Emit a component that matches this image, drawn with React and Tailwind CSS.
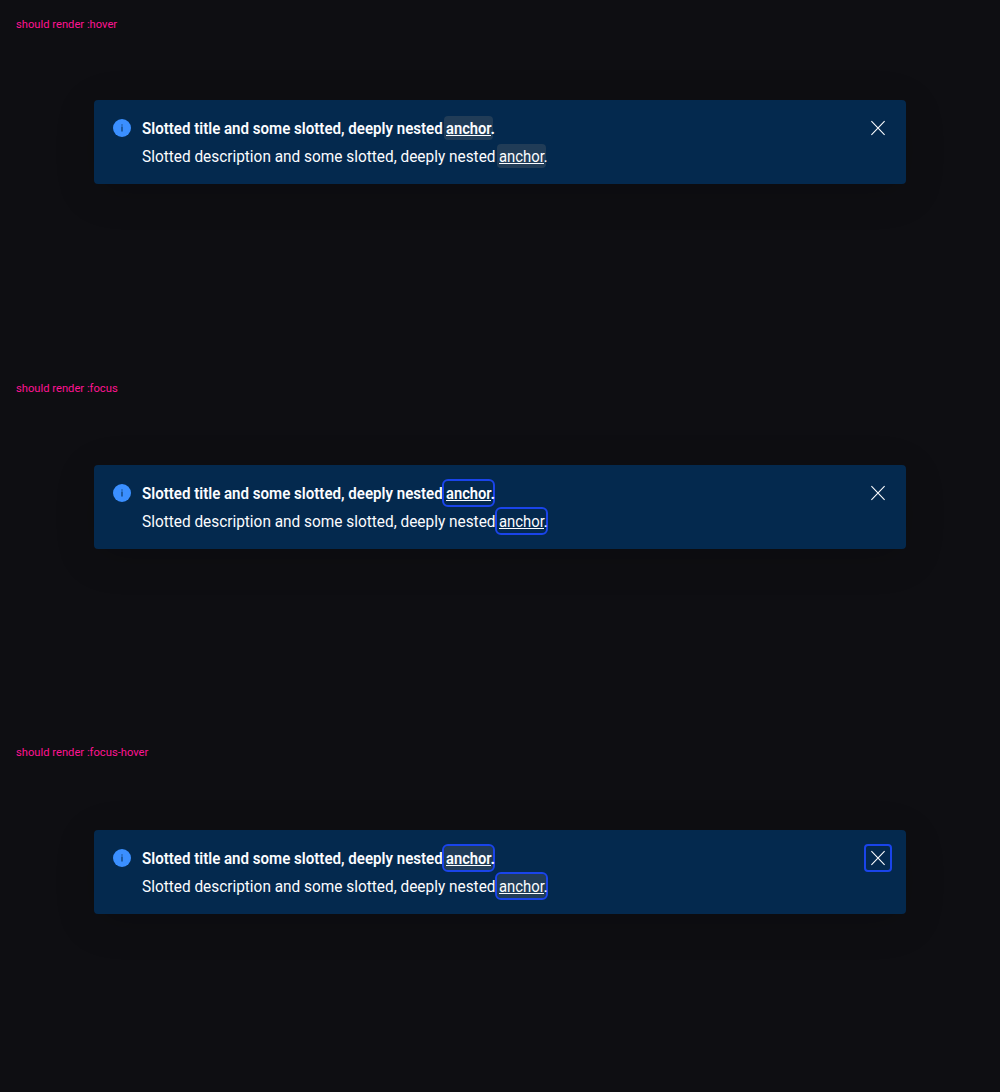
const sections = [
  { label: 'should render :hover', gap: 'pt-[68px]', link: 'bg-[#213c57]', close: '' },
  { label: 'should render :focus', gap: 'pt-[69px]', link: 'outline-2 outline-[#1a44ea]', close: '' },
  { label: 'should render :focus-hover', gap: 'pt-[70px]', link: 'bg-[#213c57] outline-2 outline-[#1a44ea]', close: 'outline-2 outline-[#1a44ea]' },
];

function Anchor({ state, className }) {
  return (
    <a className={`relative -ml-0.5 inline-flex h-6 w-[49px] shrink-0 rounded pl-0.5 ${state}`}>
      <span className={`mt-px h-6 origin-left whitespace-nowrap ${className}`}>anchor</span>
      <span className="absolute top-[19px] left-0.5 h-px w-[45px] bg-[#fbfcff]" />
    </a>
  );
}

function Banner({ link, close }) {
  return (
    <div className="mx-[94px] flex h-[84px] rounded bg-[#04294e] pt-4 pr-4 pl-4 text-[16px] leading-6 text-[#fbfcff] shadow-[0_8px_40px_rgba(0,0,0,0.16)]">
      <svg className="mr-2 h-6 w-6 shrink-0" viewBox="0 0 24 24">
        <circle cx="12" cy="12" r="9" fill="#3b8fff" />
        <path d="M11.4 10.6h1.2v4.9h-1.2zM11.4 8.4h1.2v1.1h-1.2z" fill="#04294e" fillOpacity="0.85" />
      </svg>
      <div className="flex flex-1 flex-col gap-1">
        <div className="flex h-6 font-semibold">
          <span className="mt-px w-[304px] shrink-0 origin-left scale-x-[0.943] whitespace-nowrap">Slotted title and some slotted, deeply nested</span>
          <Anchor state={link} className="scale-x-[0.92]" />
          <span className="relative z-10 mt-px -ml-[2.5px]">.</span>
        </div>
        <div className="flex h-6">
          <span className="mt-px w-[357px] shrink-0 origin-left scale-x-[0.962] whitespace-nowrap">Slotted description and some slotted, deeply nested</span>
          <Anchor state={link} className="scale-x-[0.93]" />
          <span className="relative z-10 mt-px -ml-[2.5px]">.</span>
        </div>
      </div>
      <button className={`h-6 w-6 rounded-[2px] ${close}`}>
        <svg className="h-6 w-6" viewBox="0 0 24 24" fill="none" stroke="#fbfcff" strokeWidth="1.1">
          <path d="M5.4 5.2 18.6 18.8M18.6 5.2 5.4 18.8" />
        </svg>
      </button>
    </div>
  );
}

export default function App() {
  return (
    <main className="h-[1092px] overflow-hidden bg-[#0e0e12] font-[Roboto,sans-serif]">
      {sections.map((s) => (
        <section key={s.label} className="h-[364px] pt-4">
          <h2 className="ml-4 h-4 w-max text-[11.2px] leading-[17px] text-[#ff1493]">{s.label}</h2>
          <div className={s.gap}>
            <Banner link={s.link} close={s.close} />
          </div>
        </section>
      ))}
    </main>
  );
}
